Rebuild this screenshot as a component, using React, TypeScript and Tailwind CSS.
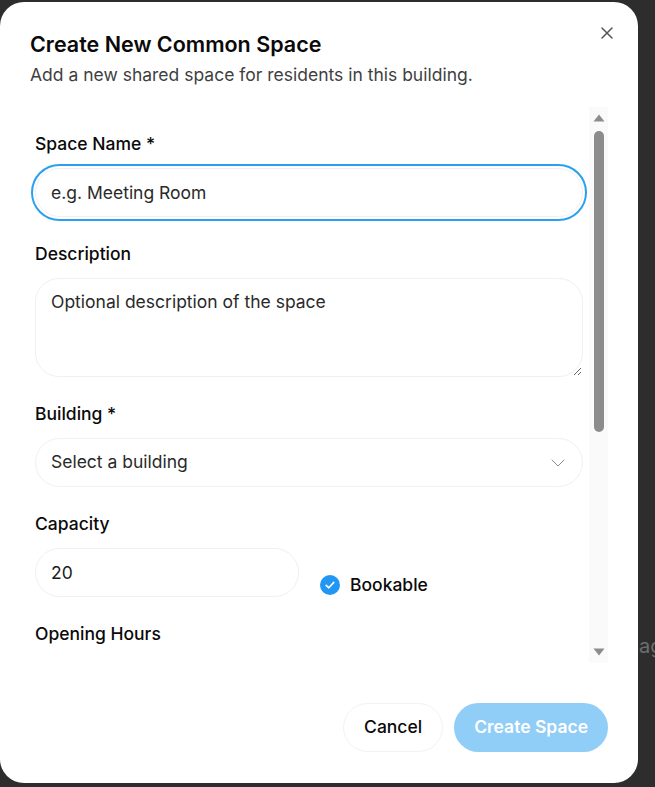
import React from "react";
import { ChevronDown } from "lucide-react";

function Label({ children }: { children: React.ReactNode }) {
  return (
    <div className="h-6 text-[17.5px] leading-6 font-medium text-[#0a0a0a]">{children}</div>
  );
}

export default function App() {
  return (
    <div
      className="relative w-[655px] h-[787px] overflow-hidden bg-[#2d2d2d]"
      style={{ fontFamily: "Inter, 'Noto Sans', sans-serif" }}
    >
      {/* dimmed page behind */}
      <div className="absolute left-[598px] top-[634px] text-[20px] leading-6 text-[#6e6e6e] whitespace-nowrap">
        Manage
      </div>

      {/* modal */}
      <div className="absolute left-0 top-[2px] w-[638px] h-[781px] bg-white rounded-[24px] flex flex-col">
        <button className="absolute left-[601px] top-[25px] w-3 h-3 flex items-center justify-center">
          <svg width="12" height="12" viewBox="0 0 12 12" fill="none">
            <path d="M1 1L11 11M11 1L1 11" stroke="#555" strokeWidth="1.5" strokeLinecap="round" />
          </svg>
        </button>

        <div className="pt-[28px] px-[30px]">
          <h2 className="text-[21.5px] leading-[28px] font-semibold text-[#0a0a0a] whitespace-nowrap">
            Create New Common Space
          </h2>
          <p className="mt-[5px] text-[17.5px] leading-6 text-[#3f3f3f] whitespace-nowrap">
            Add a new shared space for residents in this building.
          </p>
        </div>

        <div className="mt-[20px] ml-[30px] w-[578px] h-[556px] flex">
          <div className="flex-1 overflow-hidden pl-[5px] pr-[6px]">
            <div className="pt-[25px] flex flex-col gap-[25px]">
              <div className="flex flex-col gap-3">
                <Label>Space Name *</Label>
                <input
                  readOnly
                  placeholder="e.g. Meeting Room"
                  className="h-[49px] w-full rounded-full border border-[#f0f0f0] pl-[15px] text-[17.5px] text-[#1a1a1a] placeholder:text-[#2a2a2a] outline-2 outline-offset-2 outline-[#2aa0f0] outline-solid bg-white"
                />
              </div>
              <div className="flex flex-col gap-3">
                <Label>Description</Label>
                <textarea
                  readOnly
                  placeholder="Optional description of the space"
                  className="h-[99px] w-full rounded-[24px] border border-[#f0f0f0] pl-[15px] pt-[11px] text-[17.5px] leading-6 text-[#1a1a1a] placeholder:text-[#2a2a2a] outline-none bg-white"
                />
              </div>
              <div className="flex flex-col gap-3">
                <Label>Building *</Label>
                <div className="h-[49px] w-full rounded-full border border-[#f0f0f0] pl-[15px] pr-[12px] flex items-center justify-between text-[17.5px] text-[#2a2a2a]">
                  <span>Select a building</span>
                  <ChevronDown size={24} strokeWidth={1} color="#8a8a8a" />
                </div>
              </div>
              <div className="flex flex-col gap-3">
                <Label>Capacity</Label>
                <div className="grid grid-cols-2 gap-5">
                  <input
                    readOnly
                    defaultValue="20"
                    className="h-[49px] w-full rounded-full border border-[#f0f0f0] pl-[15px] text-[17.5px] text-[#1a1a1a] outline-none bg-white"
                  />
                  <div className="flex items-end">
                    <div className="flex items-center gap-[10px] h-6 pl-[1px]">
                      <span className="w-5 h-5 rounded-full bg-[#2196f3] flex items-center justify-center">
                        <svg width="12" height="12" viewBox="0 0 12 12" fill="none">
                          <path d="M2.2 6.3L4.8 8.8L9.8 3.4" stroke="white" strokeWidth="1.6" strokeLinecap="round" strokeLinejoin="round" />
                        </svg>
                      </span>
                      <span className="text-[17.5px] leading-6 font-medium text-[#0a0a0a]">Bookable</span>
                    </div>
                  </div>
                </div>
              </div>
              <div className="flex flex-col gap-3">
                <Label>Opening Hours</Label>
              </div>
            </div>
          </div>

          {/* scrollbar */}
          <div className="w-[19px] h-full bg-[#fafafa] flex flex-col items-center">
            <div className="pt-[7px] h-[22px]">
              <svg width="12" height="8" viewBox="0 0 12 8">
                <path d="M6 0.5L11.5 7.5H0.5Z" fill="#8c8c8c" />
              </svg>
            </div>
            <div className="mt-[2px] w-[10px] h-[301px] rounded-full bg-[#8c8c8c]" />
            <div className="flex-1" />
            <div className="pb-[7px] h-[22px] flex items-end">
              <svg width="12" height="8" viewBox="0 0 12 8">
                <path d="M0.5 0.5H11.5L6 7.5Z" fill="#8c8c8c" />
              </svg>
            </div>
          </div>
        </div>

        <div className="mt-auto flex justify-end gap-[11px] pr-[30px] pb-[31px]">
          <button className="h-[49px] px-[20px] rounded-full border border-[#f2f2f2] bg-white text-[17.5px] font-medium text-[#0a0a0a]">
            Cancel
          </button>
          <button className="h-[49px] px-[20px] rounded-full bg-[#90cdf7] text-[17.5px] font-semibold text-white">
            Create Space
          </button>
        </div>
      </div>
    </div>
  );
}
